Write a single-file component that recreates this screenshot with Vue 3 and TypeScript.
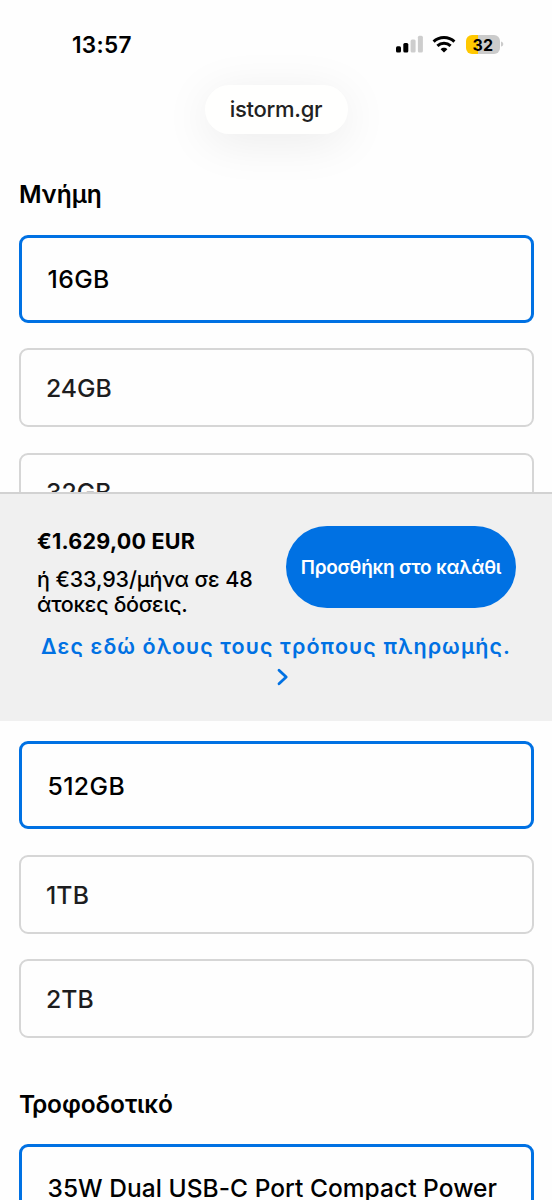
<script setup lang="ts">
interface Option {
  label: string
  selected?: boolean
  kind: string
}

const memory: Option[] = [
  { label: '16GB', selected: true, kind: 'gb' },
  { label: '24GB', kind: 'gb' },
  { label: '32GB', kind: 'gb' },
]
const storage: Option[] = [
  { label: '512GB', selected: true, kind: 'gb' },
  { label: '1TB', kind: 'tb' },
  { label: '2TB', kind: 'tb' },
]
const power: Option[] = [
  { label: '35W Dual USB-C Port Compact Power', selected: true, kind: 'adapter' },
]
</script>

<template>
  <main class="screen">
    <header class="status">
      <span class="time">13:57</span>
      <div class="indicators">
        <svg class="signal" viewBox="0 0 28 18" width="28" height="18">
          <rect x="0" y="11.2" width="5" height="6.3" rx="1.5" fill="#000" />
          <rect x="7.3" y="8" width="5" height="9.5" rx="1.5" fill="#000" />
          <rect x="14.6" y="4.4" width="5" height="13.1" rx="1.5" fill="#cdcdcd" />
          <rect x="21.9" y="0.7" width="5" height="16.8" rx="1.5" fill="#cdcdcd" />
        </svg>
        <svg class="wifi" viewBox="0 0 24 18" width="24" height="18">
          <g fill="none" stroke="#000" stroke-width="3">
            <path d="M1.6 6.6C7.3 1 16.7 1 22.4 6.6" />
            <path d="M5.4 10.9C9.2 7.3 14.8 7.3 18.6 10.9" />
          </g>
          <path d="M12 17.6 8.6 14.2C10.5 12.4 13.5 12.4 15.4 14.2Z" fill="#000" />
        </svg>
        <div class="battery"><span>32</span></div>
        <svg class="cap" viewBox="0 0 3 6" width="3" height="6">
          <path d="M0 .4C3 1.2 3 4.8 0 5.6Z" fill="#cbcbcb" />
        </svg>
      </div>
    </header>

    <div class="address"><span>istorm.gr</span></div>

    <section class="group memory">
      <h2>Μνήμη</h2>
      <div v-for="o in memory" :key="o.label" class="option" :class="[o.kind, { selected: o.selected }]">
        <span>{{ o.label }}</span>
      </div>
    </section>

    <section class="group storage">
      <div v-for="o in storage" :key="o.label" class="option" :class="[o.kind, { selected: o.selected }]">
        <span>{{ o.label }}</span>
      </div>
    </section>

    <section class="group power">
      <h2 class="power-title">Τροφοδοτικό</h2>
      <div v-for="o in power" :key="o.label" class="option" :class="[o.kind, { selected: o.selected }]">
        <span>{{ o.label }}</span>
      </div>
    </section>

    <aside class="buybar">
      <div class="offer">
        <div class="pricing">
          <strong>€1.629,00 EUR</strong>
          <p><span class="monthly">ή €33,93/μήνα σε 48</span><br /><span class="installments">άτοκες δόσεις.</span></p>
        </div>
        <button type="button"><span>Προσθήκη στο καλάθι</span></button>
      </div>
      <a class="methods">
        <span>Δες εδώ όλους τους τρόπους πληρωμής.</span>
        <svg viewBox="0 0 12 18" width="12" height="18">
          <path d="M2 2.2 9.2 9 2 15.8" fill="none" stroke="#0071e3" stroke-width="2.8" stroke-linecap="round" stroke-linejoin="round" />
        </svg>
      </a>
    </aside>
  </main>
</template>

<style>
html,
body {
  margin: 0;
  background: #fefefe;
}
</style>

<style scoped>
.screen {
  position: relative;
  box-sizing: border-box;
  width: 552px;
  height: 1200px;
  overflow: hidden;
  background: #fefefe;
  color: #000;
  font-family: Inter, "Liberation Sans", sans-serif;
}
.screen span,
.screen strong {
  white-space: nowrap;
}
.status {
  box-sizing: border-box;
  display: flex;
  justify-content: space-between;
  height: 85px;
  padding: 32px 48px 0 72px;
}
.time {
  font-size: 22.6px;
  line-height: 26px;
  font-weight: 600;
  letter-spacing: 0.3px;
}
.indicators {
  display: flex;
  padding-top: 3px;
}
.wifi {
  margin-left: 8px;
}
.battery {
  width: 34.5px;
  height: 19px;
  margin-left: 9.5px;
  border-radius: 6px;
  background: linear-gradient(90deg, #ffc800 0 11.5px, #cbcbcb 11.5px);
  text-align: center;
  font-size: 16px;
  line-height: 20px;
  font-weight: 700;
}
.cap {
  margin: 6px 0 0 1px;
}
.address {
  width: 143px;
  height: 49px;
  margin: 0 auto;
  border-radius: 25px;
  background: #fffffe;
  box-shadow: 0 8px 48px rgba(0, 0, 0, 0.08);
  text-align: center;
  font-size: 22px;
  line-height: 48px;
  font-weight: 500;
  letter-spacing: -0.3px;
  color: #222;
}
.group {
  display: flex;
  flex-direction: column;
  gap: 25.5px;
  margin: 0 18.5px 0 19px;
}
.memory {
  margin-top: 45px;
}
h2 {
  margin: 0;
  font-size: 24.5px;
  line-height: 30px;
  font-weight: 600;
}
.option {
  box-sizing: border-box;
  display: flex;
  align-items: center;
  height: 79px;
  padding: 0 0 0 25px;
  border: 2px solid #d6d6d6;
  border-radius: 9px;
  font-size: 24.75px;
  line-height: 30px;
  font-weight: 500;
  letter-spacing: 0;
  color: #1d1d1f;
}
.option.tb {
  padding-top: 1px;
  letter-spacing: 0.1px;
}
.option.selected {
  height: 88px;
  padding: 1px 0 0 25.5px;
  border: 3px solid #0071e3;
  letter-spacing: 0.4px;
  color: #000;
}
.option.adapter.selected {
  padding-top: 1px;
  font-size: 24.5px;
  letter-spacing: 0.04px;
}
.storage {
  margin-top: 209.5px;
}
.power {
  margin-top: 50.5px;
}
.power-title {
  margin-bottom: -0.5px;
  letter-spacing: -0.1px;
}
.buybar {
  position: absolute;
  left: 0;
  right: 0;
  top: 492px;
  box-sizing: border-box;
  height: 229px;
  border-top: 2px solid #d2d2d2;
  background: #f0f0f0;
}
.offer {
  display: flex;
  height: 134px;
}
.pricing {
  width: 249px;
  padding: 33px 0 0 37px;
}
strong {
  display: block;
  font-size: 21.5px;
  line-height: 28px;
  font-weight: 700;
  letter-spacing: 0.25px;
}
p {
  margin: 12px 0 0;
  font-size: 21.5px;
  line-height: 25px;
  font-weight: 500;
}
.monthly {
  letter-spacing: -0.13px;
}
.installments {
  letter-spacing: -0.32px;
}
button {
  width: 230px;
  height: 82px;
  margin: 32px 0 0;
  padding: 0;
  border: 0;
  border-radius: 41px;
  background: #0071e3;
  color: #fff;
  font-family: inherit;
  font-size: 19px;
  font-weight: 600;
  letter-spacing: -0.24px;
}
.methods {
  display: flex;
  flex-direction: column;
  align-items: center;
  gap: 7px;
  padding-top: 3px;
  color: #0071e3;
  font-size: 21.5px;
  line-height: 30px;
  font-weight: 600;
  letter-spacing: 1.07px;
}
.methods svg {
  margin-left: 13px;
}
</style>
